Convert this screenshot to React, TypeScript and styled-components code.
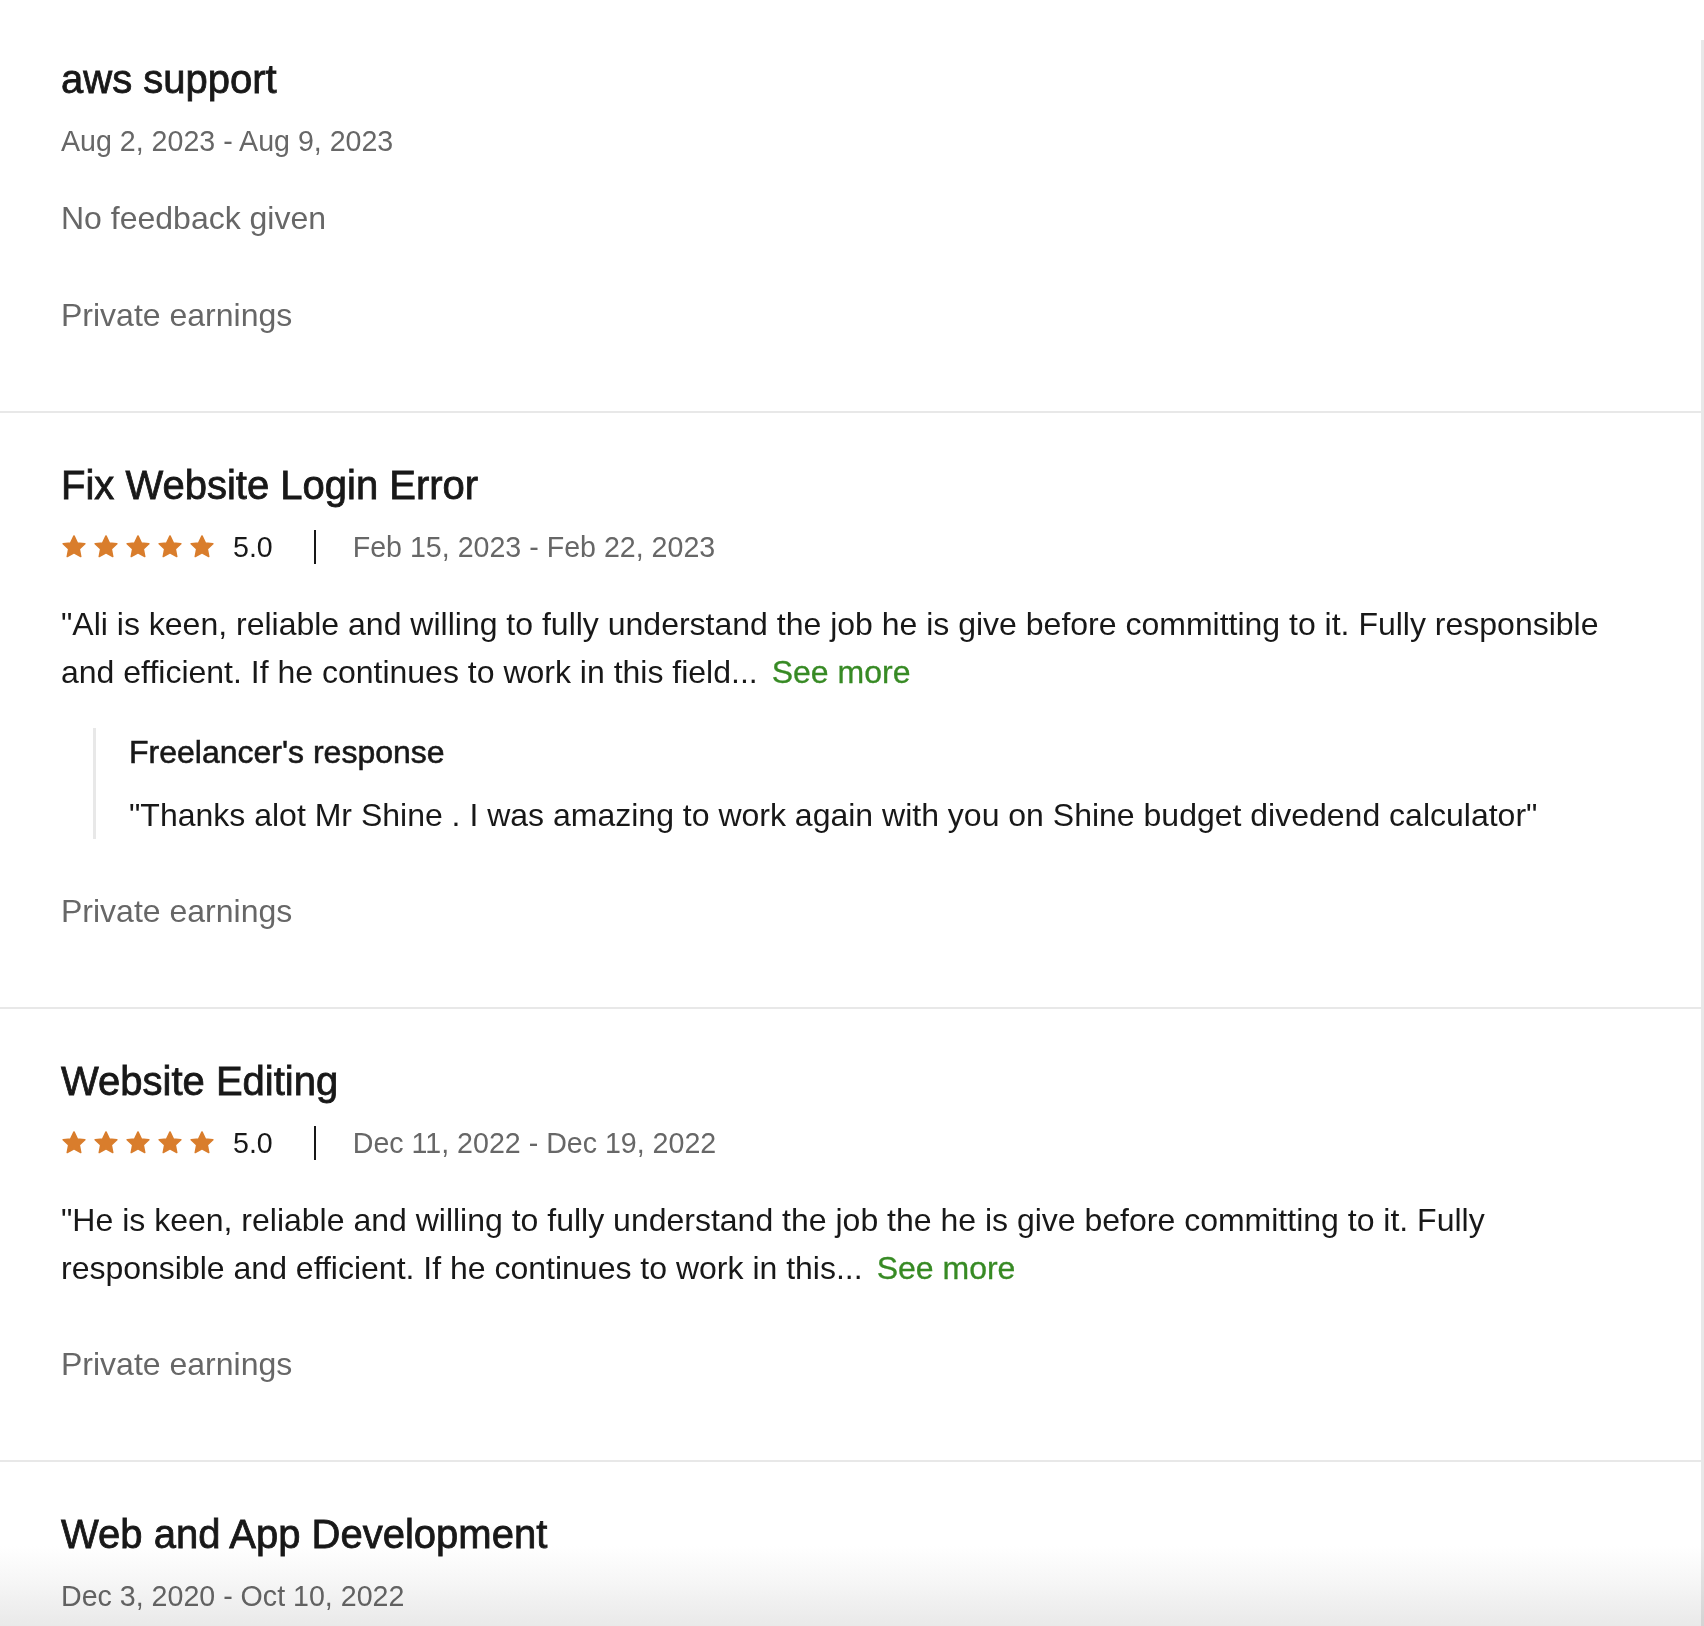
import React from "react";
import styled, { createGlobalStyle } from "styled-components";

const GlobalStyle = createGlobalStyle`
  html, body {
    margin: 0;
    padding: 0;
    background: #ffffff;
  }
  body {
    font-family: "Liberation Sans", Arial, Helvetica, sans-serif;
    color: #181818;
    -webkit-font-smoothing: antialiased;
  }
`;

const Page = styled.div`
  position: relative;
  height: 1626px;
  overflow: hidden;
  background: #ffffff;
`;

const List = styled.section`
  margin-top: 40px;
  border-right: 3px solid #e8e8e8;
  min-height: 1700px;
`;

const Item = styled.article`
  padding: 48px 61px 72px 61px;
  border-bottom: 2px solid #e8e8e8;

  &:first-child {
    padding-top: 15px;
  }
`;

const Title = styled.h4`
  margin: 0;
  font-size: 40px;
  line-height: 48px;
  font-weight: 400;
  color: #181818;
  -webkit-text-stroke: 0.8px #181818;
`;

const DateText = styled.span`
  font-size: 28.6px;
  line-height: 40px;
  color: #676767;
`;

const DateRow = styled.div`
  margin-top: 18px;
  height: 40px;
  display: flex;
  align-items: center;
`;

const RatingRow = styled.div`
  margin-top: 18px;
  height: 40px;
  display: flex;
  align-items: center;
`;

const Stars = styled.div`
  display: flex;
  align-items: center;
  gap: 6px;
`;

const StarSvg = styled.svg`
  width: 26px;
  height: 26px;
  display: block;
`;

const Score = styled.span`
  margin-left: 18px;
  font-size: 28.6px;
  line-height: 40px;
  color: #181818;
`;

const Separator = styled.span`
  width: 2px;
  height: 34px;
  background: #181818;
  margin: 0 37px 0 41px;
`;

const Muted = styled.p<{ $gap: number }>`
  margin: ${(p) => p.$gap}px 0 0 0;
  font-size: 32px;
  line-height: 48px;
  color: #676767;
`;

const Quote = styled.p`
  margin: 33px 0 0 0;
  font-size: 32px;
  line-height: 48px;
  color: #181818;
`;

const SeeMore = styled.a`
  margin-left: 14px;
  color: #378a24;
  text-decoration: none;
  -webkit-text-stroke: 0.3px #378a24;
  cursor: pointer;
`;

const Response = styled.blockquote`
  margin: 32px 0 0 32px;
  padding: 0 0 0 33px;
  border-left: 3px solid #e8e8e8;
`;

const ResponseTitle = styled.h5`
  margin: 0;
  font-size: 32px;
  line-height: 48px;
  font-weight: 400;
  color: #181818;
  -webkit-text-stroke: 0.55px #181818;
`;

const ResponseText = styled.p`
  margin: 15px 0 0 0;
  font-size: 32px;
  line-height: 48px;
  color: #181818;
`;

const Fade = styled.div`
  position: absolute;
  left: 0;
  right: 0;
  bottom: 0;
  height: 80px;
  pointer-events: none;
  mix-blend-mode: multiply;
  background: linear-gradient(to bottom, #ffffff 0%, #f6f6f6 45%, #e9e9e9 100%);
`;

const Star = () => (
  <StarSvg viewBox="0 0 24 24" aria-hidden="true">
    <path
      d="M12 1.8l3.05 6.4 7 .85-5.15 4.8 1.35 6.95L12 17.35 5.75 20.8l1.35-6.95-5.15-4.8 7-.85z"
      fill="#d97d2c"
      stroke="#d97d2c"
      strokeWidth="1.4"
      strokeLinejoin="round"
    />
  </StarSvg>
);

const Rating: React.FC<{ score: string; dates: string }> = ({ score, dates }) => (
  <RatingRow>
    <Stars>
      {[0, 1, 2, 3, 4].map((i) => (
        <Star key={i} />
      ))}
    </Stars>
    <Score>{score}</Score>
    <Separator />
    <DateText>{dates}</DateText>
  </RatingRow>
);

export default function App() {
  return (
    <Page>
      <GlobalStyle />
      <List>
        <Item>
          <Title>aws support</Title>
          <DateRow>
            <DateText>Aug 2, 2023 - Aug 9, 2023</DateText>
          </DateRow>
          <Muted $gap={33}>No feedback given</Muted>
          <Muted $gap={49}>Private earnings</Muted>
        </Item>

        <Item>
          <Title>Fix Website Login Error</Title>
          <Rating score="5.0" dates="Feb 15, 2023 - Feb 22, 2023" />
          <Quote>
            "Ali is keen, reliable and willing to fully understand the job he is give before
            committing to it. Fully responsible and efficient. If he continues to work in this
            field...
            <SeeMore>See more</SeeMore>
          </Quote>
          <Response>
            <ResponseTitle>Freelancer's response</ResponseTitle>
            <ResponseText>
              "Thanks alot Mr Shine . I was amazing to work again with you on Shine budget divedend
              calculator"
            </ResponseText>
          </Response>
          <Muted $gap={48}>Private earnings</Muted>
        </Item>

        <Item>
          <Title>Website Editing</Title>
          <Rating score="5.0" dates="Dec 11, 2022 - Dec 19, 2022" />
          <Quote>
            "He is keen, reliable and willing to fully understand the job the he is give before
            committing to it. Fully responsible and efficient. If he continues to work in this...
            <SeeMore>See more</SeeMore>
          </Quote>
          <Muted $gap={48}>Private earnings</Muted>
        </Item>

        <Item>
          <Title>Web and App Development</Title>
          <DateRow>
            <DateText>Dec 3, 2020 - Oct 10, 2022</DateText>
          </DateRow>
          <Muted $gap={33}>No feedback given</Muted>
          <Muted $gap={49}>Private earnings</Muted>
        </Item>
      </List>
      <Fade />
    </Page>
  );
}
